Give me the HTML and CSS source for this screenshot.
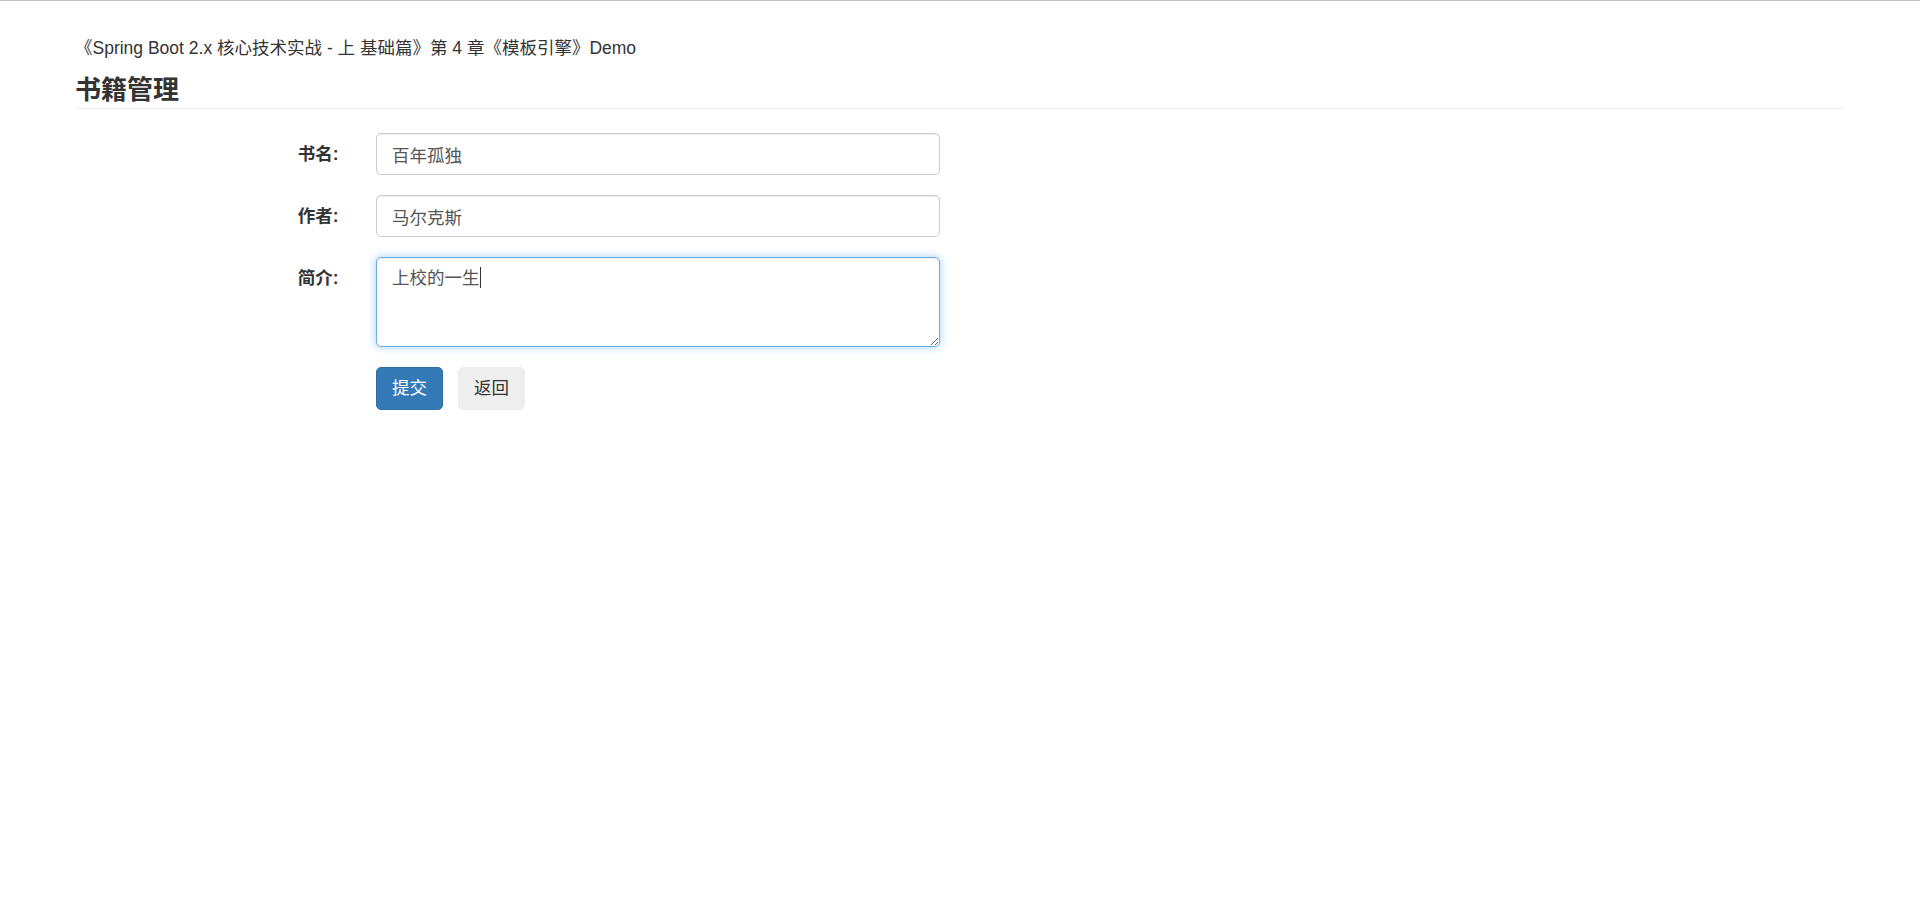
FILE: index.html
```html
<!DOCTYPE html>
<html lang="zh-CN">
<head>
<meta charset="utf-8">
<title>书籍管理</title>
<link rel="stylesheet" href="styles.css">
</head>
<body>
<div class="container">
  <div class="book-title">《Spring Boot 2.x 核心技术实战 - 上 基础篇》第 4 章《模板引擎》Demo</div>
  <div class="page-header">
    <h3 class="page-title">书籍管理</h3>
  </div>
  <form class="book-form">
    <div class="form-group">
      <label class="control-label" for="name">书名:</label>
      <div class="control">
        <input class="form-control" id="name" type="text" value="百年孤独">
      </div>
    </div>
    <div class="form-group">
      <label class="control-label" for="writer">作者:</label>
      <div class="control">
        <input class="form-control" id="writer" type="text" value="马尔克斯">
      </div>
    </div>
    <div class="form-group form-group-tight">
      <label class="control-label" for="intro">简介:</label>
      <div class="control textarea-wrap">
        <textarea class="form-control textarea focused" id="intro" rows="3">上校的一生</textarea>
        <span class="caret-mark"></span>
      </div>
    </div>
    <div class="form-group">
      <div class="control-label"></div>
      <div class="control buttons">
        <button type="button" class="btn btn-primary">提交</button>
        <button type="button" class="btn btn-default">返回</button>
      </div>
    </div>
  </form>
</div>
</body>
</html>
```

FILE: styles.css
```css
html, body {
  margin: 0;
  padding: 0;
  background: #fff;
}
body {
  border-top: 1px solid #c4c4c4;
  font-family: "Liberation Sans", "Noto Sans CJK SC", sans-serif;
  font-size: 17.5px;
  line-height: 25px;
  color: #333;
}
.container {
  padding: 0 75px;
}
.book-title {
  margin-top: 35px;
  font-size: 17.5px;
  line-height: 25px;
  color: #333;
}
.page-header {
  border-bottom: 1px solid #eeeeee;
  padding-bottom: 4px;
}
.page-title {
  margin: 15px 0 0 0;
  font-size: 26px;
  line-height: 28px;
  font-weight: 700;
  color: #333;
}
.book-form {
  margin-top: 24px;
}
.form-group {
  display: flex;
  gap: 37.5px;
  margin-bottom: 20px;
}
.control-label {
  width: 263.5px;
  flex: none;
  text-align: right;
  padding-top: 8.75px;
  font-weight: 700;
  line-height: 25px;
  box-sizing: border-box;
}
.control {
  width: 564px;
  flex: none;
}
.form-control {
  display: block;
  box-sizing: border-box;
  width: 100%;
  height: 42px;
  padding: 7.5px 15px;
  font-family: inherit;
  font-size: 17.5px;
  line-height: 25px;
  color: #555;
  background: #fff;
  border: 1px solid #ccc;
  border-radius: 5px;
  box-shadow: inset 0 1px 1px rgba(0,0,0,.075);
  outline: none;
  margin: 0;
}
.textarea-wrap {
  position: relative;
}
.textarea {
  height: 90px;
  resize: vertical;
}
.textarea.focused {
  border-color: #66afe9;
  box-shadow: inset 0 1px 1px rgba(0,0,0,.075), 0 0 8px rgba(102,175,233,.6);
}
.caret-mark {
  position: absolute;
  left: 103.5px;
  top: 10px;
  width: 1px;
  height: 21px;
  background: #333;
}
.buttons {
  display: flex;
  gap: 15px;
}
.btn {
  box-sizing: border-box;
  height: 43px;
  padding: 7.5px 15px;
  font-family: inherit;
  font-size: 17.5px;
  line-height: 25px;
  border: 1px solid transparent;
  border-radius: 5px;
  cursor: pointer;
}
.btn-primary {
  color: #fff;
  background: #337ab7;
  border-color: #2e6da4;
}
.btn-default {
  color: #333;
  background: #eeeeee;
  border-color: #eeeeee;
}
```
